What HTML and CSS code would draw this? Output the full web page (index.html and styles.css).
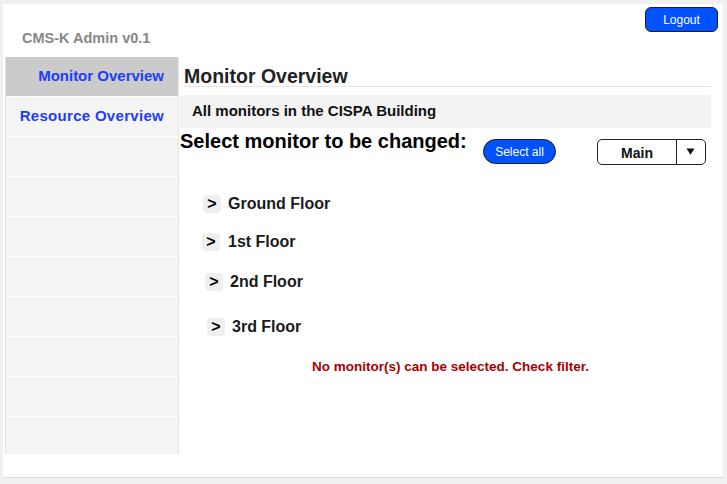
FILE: index.html
```html
<!DOCTYPE html>
<html lang="en">
<head>
<meta charset="utf-8">
<title>CMS-K Admin</title>
<link rel="stylesheet" href="styles.css">
</head>
<body>
<div class="page">
  <header class="topbar">
    <div class="brand">CMS-K Admin v0.1</div>
    <button class="btn btn-logout" type="button">Logout</button>
  </header>
  <div class="main">
    <nav class="sidebar">
      <a class="nav-item nav-item--active">Monitor Overview</a>
      <a class="nav-item nav-item--wide">Resource Overview</a>
      <div class="nav-item"></div>
      <div class="nav-item"></div>
      <div class="nav-item"></div>
      <div class="nav-item"></div>
      <div class="nav-item"></div>
      <div class="nav-item"></div>
      <div class="nav-item"></div>
      <div class="nav-item"></div>
    </nav>
    <section class="content">
      <h1 class="heading">Monitor Overview</h1>
      <div class="infobox">All monitors in the CISPA Building</div>
      <div class="select-row">
        <div class="select-label">Select monitor to be changed:</div>
        <button class="btn btn-select" type="button">Select all</button>
        <div class="dropdown">
          <span class="dropdown-value">Main</span>
          <span class="dropdown-arrow">
            <svg width="9" height="7" viewBox="0 0 9 7"><path d="M0.5 0.5 H8.5 L4.5 6.8 Z" fill="#111"/></svg>
          </span>
        </div>
      </div>
      <ul class="floors">
        <li class="floor floor--g"><span class="chev">&gt;</span><span class="floor-name">Ground Floor</span></li>
        <li class="floor floor--1"><span class="chev">&gt;</span><span class="floor-name">1st Floor</span></li>
        <li class="floor floor--2"><span class="chev">&gt;</span><span class="floor-name">2nd Floor</span></li>
        <li class="floor floor--3"><span class="chev">&gt;</span><span class="floor-name">3rd Floor</span></li>
      </ul>
      <p class="error">No monitor(s) can be selected. Check filter.</p>
    </section>
  </div>
</div>
</body>
</html>
```

FILE: styles.css
```css
html, body {
  margin: 0;
  padding: 0;
}
body {
  background: #f0f0f0;
  font-family: "Liberation Sans", Arial, sans-serif;
  width: 727px;
  height: 484px;
  overflow: hidden;
}
.page {
  margin: 4px 0 0 3px;
  width: 720px;
  height: 473px;
  background: #ffffff;
  border-bottom: 1px solid #dcdcdc;
}
.topbar {
  display: flex;
  justify-content: space-between;
  align-items: flex-start;
  height: 53px;
}
.brand {
  margin-top: 26px;
  padding-left: 19px;
  font-weight: bold;
  font-size: 14.5px;
  line-height: 17px;
  color: #878787;
}
.btn {
  font-family: "Liberation Sans", Arial, sans-serif;
  font-size: 12px;
  color: #ffffff;
  background: #0052ff;
  border: 1.5px solid #1c1c30;
  box-sizing: border-box;
  width: 73px;
  height: 25px;
  padding: 0;
  display: flex;
  align-items: center;
  justify-content: center;
}
.btn-logout {
  margin-top: 3px;
  margin-right: 5px;
  border-radius: 6px;
}
.main {
  display: flex;
  height: 420px;
}
.sidebar {
  margin-left: 2px;
  width: 174px;
  height: 397px;
  box-sizing: border-box;
  border-left: 1px solid #e0e0e0;
  border-right: 1px solid #e6e6e6;
  background: #f4f4f4;
  overflow: hidden;
  display: flex;
  flex-direction: column;
}
.nav-item {
  flex-shrink: 0;
  display: block;
  height: 40px;
  box-sizing: border-box;
  border-bottom: 1px solid #fcfcfc;
  line-height: 38px;
  padding-right: 14px;
  text-align: right;
  font-weight: bold;
  font-size: 15px;
  color: #1e3cff;
  text-decoration: none;
  white-space: nowrap;
}
.nav-item--active {
  background: #cbcbcb;
}
.nav-item--wide {
  letter-spacing: 0.3px;
}
.content {
  margin-left: 1px;
  width: 531px;
  display: flex;
  flex-direction: column;
}
.heading {
  margin: 10px 0 0 3px;
  padding-left: 1px;
  font-weight: bold;
  font-size: 19.5px;
  line-height: 19px;
  color: #222222;
  border-bottom: 1px solid #e4e4e4;
}
.infobox {
  margin-top: 8px;
  height: 33px;
  box-sizing: border-box;
  line-height: 32px;
  padding-left: 12px;
  background: #f3f3f3;
  font-weight: bold;
  font-size: 15px;
  color: #111111;
}
.select-row {
  margin-top: 2px;
  height: 35px;
  display: flex;
  align-items: flex-start;
}
.select-label {
  width: 303px;
  flex-shrink: 0;
  font-weight: bold;
  font-size: 20px;
  line-height: 22px;
  color: #000000;
  white-space: nowrap;
}
.btn-select {
  margin-top: 9px;
  border-radius: 13px;
}
.dropdown {
  margin-left: 41px;
  margin-top: 9px;
  width: 109px;
  height: 26px;
  box-sizing: border-box;
  border: 1.5px solid #222222;
  border-radius: 5px;
  background: #ffffff;
  display: flex;
}
.dropdown-value {
  width: 79px;
  box-sizing: border-box;
  border-right: 1.5px solid #222222;
  display: flex;
  align-items: center;
  justify-content: center;
  font-weight: bold;
  font-size: 14px;
  color: #111111;
  padding-top: 2px;
}
.dropdown-arrow {
  flex: 1;
  display: flex;
  align-items: center;
  justify-content: center;
  padding-right: 2px;
  padding-bottom: 2px;
}
.floors {
  list-style: none;
  margin: 28px 0 0;
  padding: 0;
}
.floor {
  display: flex;
  align-items: center;
  height: 22px;
}
.chev {
  width: 18px;
  height: 18px;
  border-radius: 4px;
  background: #efefef;
  display: flex;
  align-items: center;
  justify-content: center;
  font-weight: bold;
  font-size: 16px;
  color: #000000;
}
.floor-name {
  margin-left: 7px;
  font-weight: bold;
  font-size: 16px;
  color: #1a1a1a;
}
.floor--g { margin-left: 23px; }
.floor--1 { margin-left: 22px; margin-top: 16px; }
.floor--1 .floor-name { margin-left: 8px; }
.floor--2 { margin-left: 25px; margin-top: 18px; }
.floor--3 { margin-left: 27px; margin-top: 23px; }
.error {
  margin: 21px 0 0;
  padding-left: 10px;
  text-align: center;
  font-weight: bold;
  font-size: 13.5px;
  line-height: 16px;
  color: #a80000;
}
```
